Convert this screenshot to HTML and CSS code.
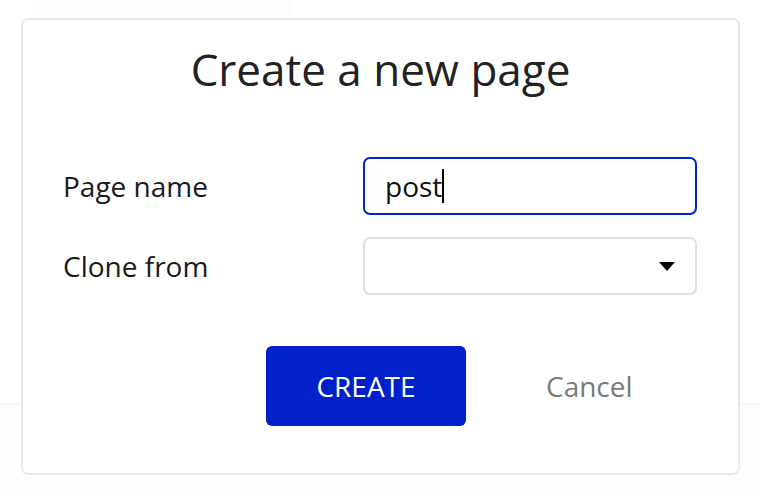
FILE: index.html
```html
<!DOCTYPE html>
<html>
<head>
<meta charset="utf-8">
<link rel="stylesheet" href="styles.css">
</head>
<body>
<div class="backdrop">
  <div class="top-strip"></div>
  <div class="bottom-strip"></div>
  <div class="dialog">
    <h1 class="title">Create a new page</h1>
    <div class="form">
      <label class="label">Page name</label>
      <div class="input focused"><span class="value">post</span><span class="caret"></span></div>
      <label class="label">Clone from</label>
      <div class="input select">
        <svg class="arrow" width="16" height="9" viewBox="0 0 16 9"><path d="M0 0H16L8 9Z" fill="#000"/></svg>
      </div>
    </div>
    <div class="actions">
      <button class="btn-create">CREATE</button>
      <button class="btn-cancel">Cancel</button>
    </div>
  </div>
</div>
</body>
</html>
```
FILE: styles.css
```css
html, body {
  margin: 0;
  padding: 0;
  background: #ffffff;
  font-family: "Open Sans", "Noto Sans", sans-serif;
}
.backdrop {
  position: relative;
  width: 760px;
  height: 496px;
  overflow: hidden;
  padding-top: 18px;
  box-sizing: border-box;
}
.top-strip {
  position: absolute;
  left: 33px;
  top: 0;
  width: 258px;
  height: 16px;
  background: #fdfdfd;
}
.bottom-strip {
  position: absolute;
  left: 0;
  right: 0;
  top: 403px;
  bottom: 0;
  border-top: 2px solid #f6f7f7;
  background: #fdfdfd;
}
.dialog {
  position: relative;
  margin-left: 21px;
  width: 719px;
  height: 457px;
  box-sizing: border-box;
  border: 2px solid #e9e9e9;
  border-radius: 7px;
  background: #fff;
  padding: 0 40px;
}
.title {
  margin: 19px 0 0;
  text-align: center;
  font-weight: 400;
  font-size: 44px;
  line-height: 60px;
  color: #222;
}
.form {
  margin-top: 58px;
  display: grid;
  grid-template-columns: 300px 334px;
  row-gap: 22px;
  align-items: center;
}
.label {
  font-size: 28px;
  color: #1a1a1a;
}
.input {
  height: 58px;
  box-sizing: border-box;
  border: 2px solid #e0e0e0;
  border-radius: 7px;
  display: flex;
  align-items: center;
  padding: 0 20px;
  font-size: 28px;
  color: #111;
}
.input.focused {
  border-color: #0022cc;
}
.value {
  line-height: 34px;
}
.caret {
  display: inline-block;
  width: 2px;
  height: 34px;
  background: #000;
  margin-left: 0;
}
.select {
  justify-content: flex-end;
  padding-right: 20px;
}
.arrow {
  display: block;
}
.actions {
  display: flex;
  align-items: center;
  margin-top: 51px;
  padding-left: 203px;
}
.btn-create {
  width: 200px;
  height: 80px;
  border: none;
  border-radius: 6px;
  background: #0020c9;
  color: #fff;
  font-family: "Open Sans", "Noto Sans", sans-serif;
  font-size: 28px;
  padding: 0;
}
.btn-cancel {
  margin-left: 80px;
  border: none;
  background: transparent;
  padding: 0;
  font-family: "Open Sans", "Noto Sans", sans-serif;
  font-size: 28px;
  color: #7a7a7a;
}
```
